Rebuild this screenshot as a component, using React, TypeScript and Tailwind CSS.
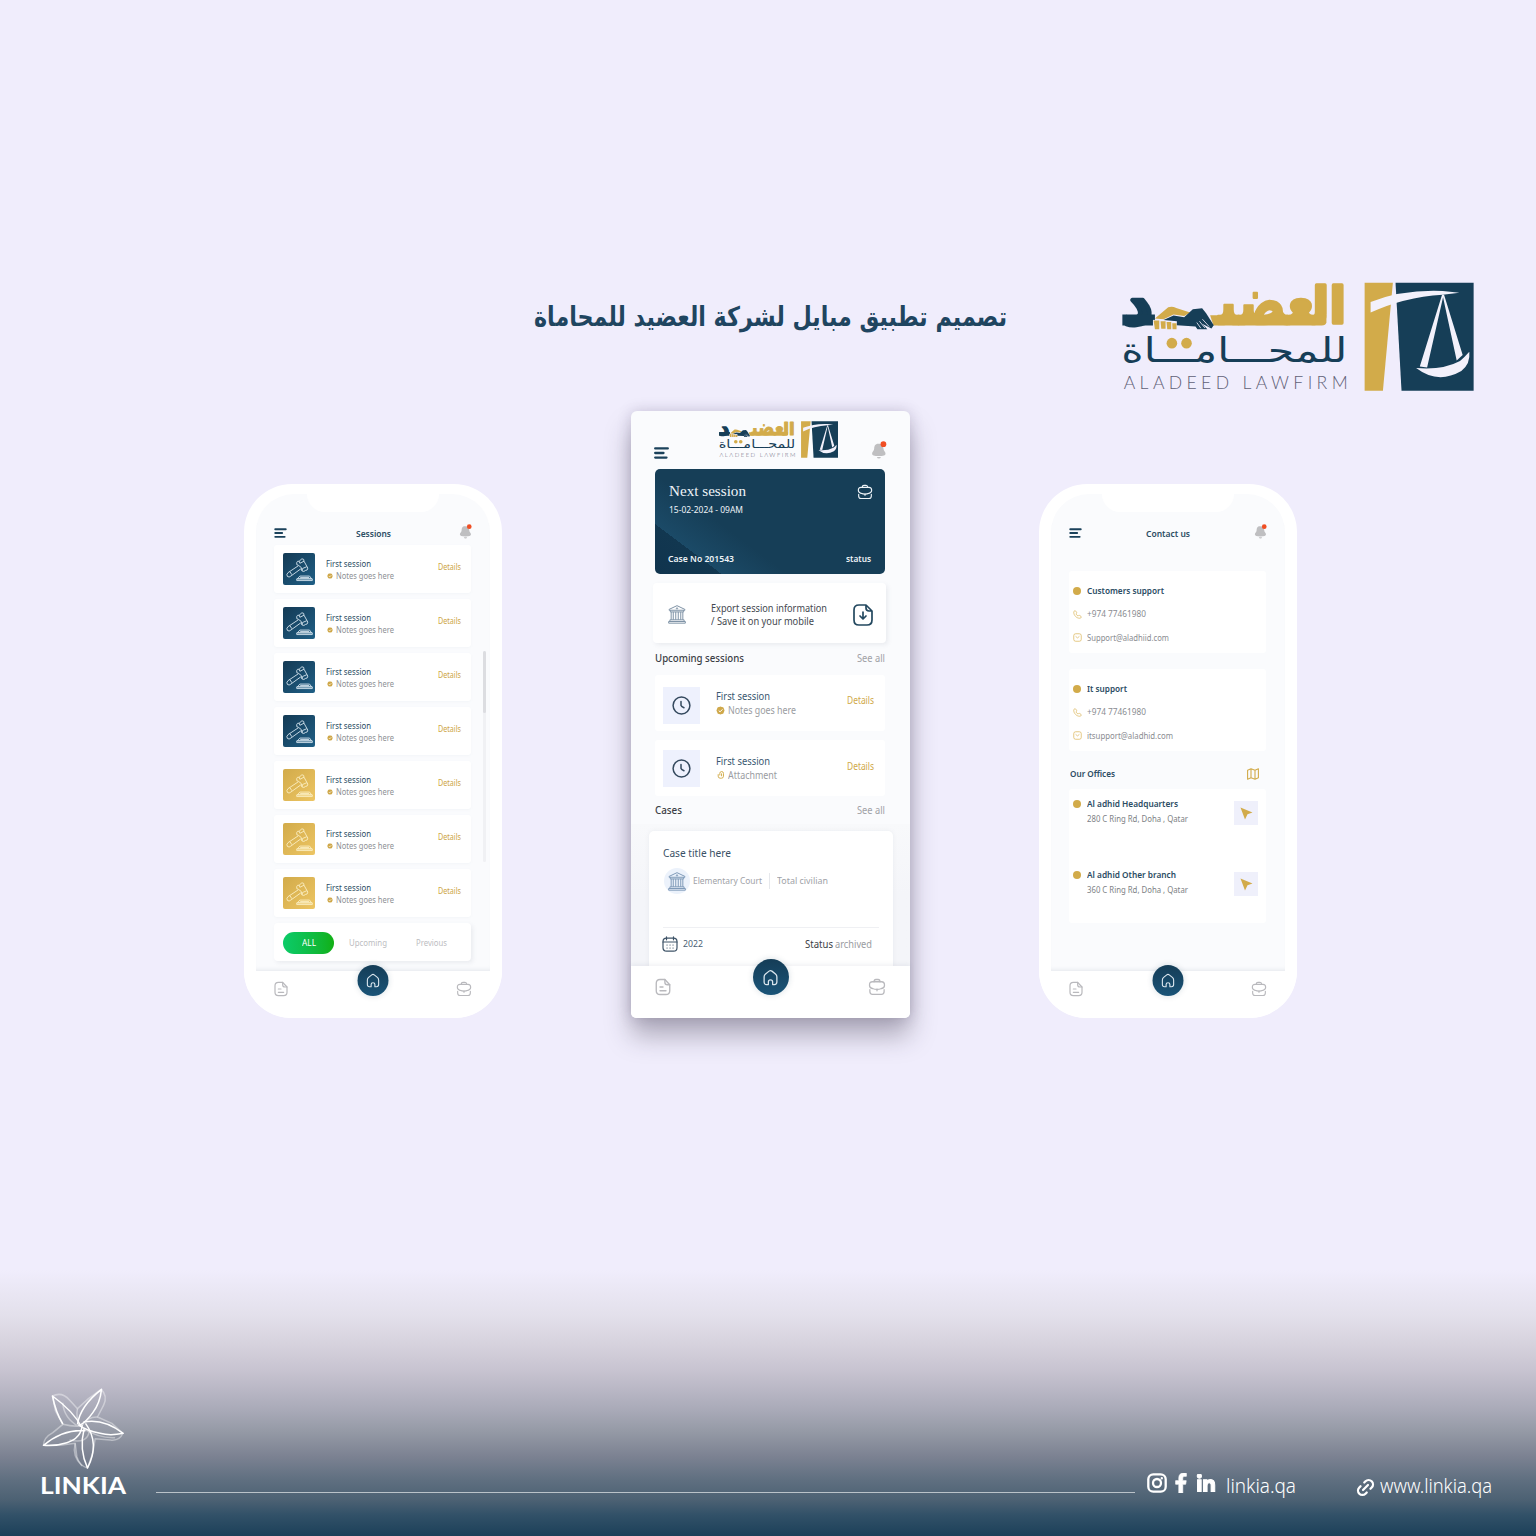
import React, { useLayoutEffect, useRef } from "react";
import { FaFacebookF, FaLinkedinIn } from "react-icons/fa";
import { Link2 } from "lucide-react";

/* One line of text condensed or stretched to a given width. */
function Fit({ w, className = "", children }: { w: number; className?: string; children: React.ReactNode }) {
  const ref = useRef<HTMLSpanElement>(null);
  useLayoutEffect(() => {
    const el = ref.current;
    if (!el) return;
    el.style.transform = "none";
    const natural = el.getBoundingClientRect().width;
    if (natural) el.style.transform = `scaleX(${w / natural})`;
  }, [w]);
  return (
    <span className={`flex shrink-0 items-start ${className}`} style={{ width: w }}>
      <span ref={ref} className="block shrink-0 origin-left whitespace-nowrap">
        {children}
      </span>
    </span>
  );
}

function Logo({ className }: { className: string }) {
  return (
    <svg className={`overflow-visible ${className}`} viewBox="36 36 1057 328">
      <g fontFamily="DejaVu Sans, sans-serif" direction="rtl" strokeLinejoin="round">
        <text x="709" y="160" fontSize="150" fontWeight="700" fill="#d2ab4a" stroke="#d2ab4a" strokeWidth="10" textLength="106" lengthAdjust="spacingAndGlyphs">{"ال\u200d"}</text>
        <text x="615" y="163" fontSize="196" fontWeight="700" fill="#d2ab4a" stroke="#d2ab4a" strokeWidth="7" textLength="290" lengthAdjust="spacingAndGlyphs">{"\u200dعضى\u200d"}</text>
        <text x="128" y="161" fontSize="176" fontWeight="700" fill="#163e57" stroke="#163e57" strokeWidth="13" textLength="90" lengthAdjust="spacingAndGlyphs">د</text>
        <text x="713" y="277" fontSize="102" fill="#163e57" textLength="680" lengthAdjust="spacingAndGlyphs">للمحـــامـــاة</text>
      </g>
      <path d="M300 136H650V158Q648 167 636 167H310Z" fill="#d2ab4a" />
      <path d="M36 134H134V167H36Z" fill="#163e57" />
      <circle cx="185" cy="220" r="16" fill="#d2ab4a" />
      <circle cx="229" cy="220" r="16" fill="#d2ab4a" />
      <path d="M134 146 L174 112 Q186 108 198 114 L240 128 L222 138 L190 134 L160 148Z" fill="#d2ab4a" />
      <path d="M128 150h74v30h-74z" fill="#f0edfc" />
      <path d="M130 152h17v26h-13zM151 154h15v23h-13zM169 156h14v22h-12zM186 160h13v18h-12z" fill="#d2ab4a" />
      <path d="M160 150 L190 137 L222 142 L248 118 L276 115 L288 130 L311 166 L304 176 L276 162 L292 178 H262 L256 170 L200 166 L200 154Z" fill="#163e57" />
      <path d="M277 148l20 22M268 154l16 20M260 158l12 17" stroke="#efecfa" strokeWidth="2.5" />
      <text x="40" y="359" fontFamily="Lato, sans-serif" fontWeight="300" fontSize="53" fill="#5f6076" textLength="674" lengthAdjust="spacing">ALADEED LAWFIRM</text>
      <path d="M765 38H850L820 363H765Z" fill="#d2ab4a" />
      <path d="M858 38H1093V363H876Z" fill="#163e57" />
      <path d="M783 96Q880 58 1000 63L1050 68L1000 74Q880 82 783 128Z" fill="#f3f1fb" />
      <path d="M998 74L931 290L953 293L1001 82L1042 272L1060 256L1004 74Z" fill="#f3f1fb" />
      <path d="M920 295Q1000 302 1052 274Q1066 262 1080 246Q1084 282 1056 304Q985 345 920 295Z" fill="#f3f1fb" />
    </svg>
  );
}

function Menu({ className }: { className: string }) {
  return (
    <svg className={className} viewBox="0 0 15 12" stroke="#1b425b" strokeWidth="2.300" strokeLinecap="round">
      <path d="M1.200 1.400H13.800M1.200 6H9.500M1.200 10.600H12.500" />
    </svg>
  );
}

function Bell({ className }: { className: string }) {
  return (
    <svg className={className} viewBox="0 0 16 17">
      <path d="M7 2.500C3.600 2.500 3 5 3 7.200 3 9.500 1 10 1 12c0 1.500 2 2.200 6.400 2.200s6.300-.8 6.300-2.200c0-2-2-2.500-2-4.800C11.700 5 10.400 2.500 7 2.500Z" fill="#bfbfc1" />
      <path d="M5.500 15h3.800q-.4 1.600-1.900 1.600T5.500 15Z" fill="#bfbfc1" />
      <circle cx="11.700" cy="3" r="2.700" fill="#f04e23" />
    </svg>
  );
}

function Briefcase({ className }: { className: string }) {
  return (
    <svg className={className} viewBox="0 0 24 24" fill="none" stroke="currentColor" strokeWidth="1.700" strokeLinecap="round" strokeLinejoin="round">
      <path d="M8 5C8 2.500 9 2 10.500 2h3C15 2 16 2.500 16 5" />
      <path d="M6 5h12c3 0 4 1.500 4 4.500 0 2.500-1.500 4-4 4.500-2 .8-4 1.200-6 1.200S8 14.800 6 14C3.500 13.500 2 12 2 9.500 2 6.500 3 5 6 5Z" />
      <path d="M12 15v2M2.500 15.500v2.500c0 2.500 1 3.800 3.500 3.800h12c2.500 0 3.500-1.300 3.500-3.800v-2.500" />
    </svg>
  );
}

function Doc({ className }: { className: string }) {
  return (
    <svg className={className} viewBox="0 0 24 24" fill="none" stroke="currentColor" strokeWidth="1.800" strokeLinecap="round" strokeLinejoin="round">
      <path d="M21 9v8c0 3.500-1.500 5-5 5H8c-3.500 0-5-1.500-5-5V7c0-3.500 1.500-5 5-5h6.500Z" />
      <path d="M14.500 2v3.500C14.500 8 16 9 18 9h3M8 12h4M8 17h8" />
    </svg>
  );
}

function Home({ className }: { className: string }) {
  return (
    <svg className={className} viewBox="0 0 24 24" fill="none" stroke="#dbe6ee" strokeWidth="1.800" strokeLinejoin="round">
      <path d="M9 22H6.500C4 22 3 20.500 3 18.500V11c0-2 .6-2.800 2-4l5-4c1.300-1 2.700-1 4 0l5 4c1.400 1.200 2 2 2 4v7.500c0 2-1 3.500-3.500 3.500H15v-3.500c0-4-6-4-6 0Z" />
    </svg>
  );
}

function Court({ className }: { className: string }) {
  return (
    <svg className={className} viewBox="0 0 24 24" fill="none" stroke="currentColor" strokeWidth="1.200" strokeLinejoin="round">
      <path d="M2.500 7.500V6.500L12 2l9.500 4.500v1ZM4 7.500V9.500H20V7.500M5 9.500V19M7.500 9.500V19M10.500 9.500V19M13.500 9.500V19M16.500 9.500V19M19 9.500V19M3.500 19H20.500V21H3.500ZM2 21H22V23H2Z" />
      <circle cx="12" cy="5.300" r=".8" />
    </svg>
  );
}

function Clock() {
  return (
    <svg className="size-[19px]" viewBox="0 0 19 19" fill="none" stroke="#34495e" strokeWidth="1.500" strokeLinecap="round">
      <circle cx="9.500" cy="9.500" r="8.400" />
      <path d="M9 5.500V9.300Q9.200 10.500 12 11.700" />
    </svg>
  );
}

function Check({ className }: { className: string }) {
  return (
    <svg className={className} viewBox="0 0 10 10">
      <path d="M5 .5L6.400 1.200 8 1.300 8.700 2.900 9.500 5 8.700 7 8 8.600 6.400 8.800 5 9.500 3.500 8.800 2 8.600 1.300 7 .5 5 1.300 2.900 2 1.300 3.500 1.200Z" fill="#cfa84a" />
      <path d="M3 5L4.500 6.500L7.200 3.700" fill="none" stroke="#fff" strokeWidth="1.100" />
    </svg>
  );
}

function Gavel({ gold }: { gold: boolean }) {
  return (
    <div className={`flex size-8 items-center justify-center rounded-[2px] bg-gradient-to-br ${gold ? "from-[#d2ab4a] to-[#edc563]" : "from-[#143a54] to-[#1f5f86]"}`}>
      <svg className={`size-[27px] ${gold ? "text-[#fbeec3]" : "text-[#d6e4ee]"}`} viewBox="0 0 78 78" fill="none" stroke="currentColor" strokeWidth="2.600" strokeLinejoin="round">
        <path d="M31 19Q32 14 38 15L46 8Q53 8 52 15L63 35Q63 42 56 42Q52 47 46 43L44 33L36 27Q29 27 31 19Z" />
        <path d="M38 15L40 21L52 15M46 43L48 36L60 31M36 28L6 48Q0 53 4 59Q9 63 14 58L43 37M11 45L17 54" />
        <path d="M33 66L40 58H68L74 66ZM31 66H76V71H31ZM41 62H67" />
      </svg>
    </div>
  );
}

function NavBar({ big = false }: { big?: boolean }) {
  return (
    <div className={`relative flex shrink-0 justify-between bg-white text-[#b9b9bd] ${big ? "h-[52px] rounded-b-[5px] pl-[23px] pr-[24px] pt-[12px] shadow-[0_-2px_4px_rgba(120,130,150,0.10)]" : "h-[47px] w-[258px] rounded-b-[48px] pl-[29px] pr-[30px] pt-[10px]"}`}>
      <Doc className={big ? "size-[18px]" : "size-[16px]"} />
      <div className={`absolute left-1/2 flex -translate-x-1/2 items-center justify-center rounded-full bg-gradient-to-b from-[#153d57] to-[#1a5478] shadow-[0_0_6px_rgba(20,60,90,0.16)] ${big ? "-top-[7px] size-9" : "-top-[6px] size-[31px]"}`}>
        <Home className={big ? "size-[17px]" : "size-[15px]"} />
      </div>
      <Briefcase className={big ? "size-[18px]" : "size-[16px]"} />
    </div>
  );
}

function Phone({ title, titleW, children }: { title: string; titleW: number; children: React.ReactNode }) {
  return (
    <div className="flex h-[534px] w-[258px] shrink-0 flex-col rounded-[48px] bg-white">
      <div className="mx-[12px] mt-[10px] flex h-[477px] flex-col rounded-t-[38px] bg-[#fafbfd] shadow-[inset_0_-4px_4px_-3px_rgba(120,130,150,0.16)]">
        <div className="mx-auto h-[18px] w-[132px] rounded-b-[18px] bg-white" />
        <div className="flex h-[33px] items-center justify-between pl-[18px] pr-[17px] pt-[10px]">
          <Menu className="mb-[2px] h-[10px] w-[13px]" />
          <Fit w={titleW} className="text-[9px] font-semibold leading-[13px] text-[#2b4c63]">{title}</Fit>
          <Bell className="mb-[5px] h-[15px] w-[14px]" />
        </div>
        {children}
      </div>
      <NavBar />
    </div>
  );
}

function Sessions() {
  return (
    <Phone title="Sessions" titleW={35}>
      <div className="flex">
        <div className="flex w-[215px] flex-col gap-[6px] pl-[18px]">
          {[false, false, false, false, true, true, true].map((gold, i) => (
            <div key={i} className="flex h-[48px] items-start rounded-[3px] bg-white pl-[9px] pt-[8px] shadow-[0_1px_3px_rgba(120,130,150,0.05)]">
              <Gavel gold={gold} />
              <div className="ml-[11px] flex w-[112px] flex-col pt-[5px]">
                <Fit w={45} className="text-[8.500px] leading-[12px] text-[#2b4c63]">First session</Fit>
                <div className="flex items-center gap-[3px]">
                  <Check className="ml-px size-[6px]" />
                  <Fit w={58} className="text-[8.500px] leading-[12px] text-[#8d8f94]">Notes goes here</Fit>
                </div>
              </div>
              <Fit w={23} className="mt-[8px] text-[8px] leading-[12px] text-[#cda544]">Details</Fit>
            </div>
          ))}
        </div>
        <div className="ml-[12px] mt-[106px] h-[211px] w-[3px] rounded-full bg-[#f0f1f4]">
          <div className="h-[62px] rounded-full bg-[#dcdde1]" />
        </div>
      </div>
      <div className="ml-[18px] mt-[6px] flex h-[38px] w-[197px] items-center rounded-[4px] bg-white pl-[9px] pt-[2px] shadow-[2px_2px_4px_rgba(120,130,150,0.12)]">
        <div className="flex h-[22px] w-[51px] items-center justify-center rounded-full bg-gradient-to-r from-[#0ccb68] to-[#12b012]">
          <Fit w={14} className="text-[8px] leading-[12px] text-white">ALL</Fit>
        </div>
        <Fit w={38} className="ml-[15px] text-[8px] leading-[12px] text-[#bcbdc1]">Upcoming</Fit>
        <Fit w={31} className="ml-[29px] text-[8px] leading-[12px] text-[#bcbdc1]">Previous</Fit>
      </div>
    </Phone>
  );
}

function Support({ name, nameW, mail, mailW }: { name: string; nameW: number; mail: string; mailW: number }) {
  return (
    <div className="ml-[18px] flex h-[82px] w-[197px] flex-col rounded-[3px] bg-white pl-[4px] pt-[8px]">
      <div className="flex h-[23.500px] items-center gap-[6px]">
        <div className="size-[8px] rounded-full bg-[#d2ab4a]" />
        <Fit w={nameW} className="text-[9px] font-semibold leading-[12px] text-[#2b4c63]">{name}</Fit>
      </div>
      <div className="flex h-[23.500px] items-center gap-[5px]">
        <svg className="size-[9px]" viewBox="0 0 24 24" fill="none" stroke="#dcb75c" strokeWidth="2">
          <path d="M22 18.500c0 2-2 3.500-4 3.500C9 22 2 14 2 6c0-2 1.500-4 3.500-4 1 0 1.500.5 2.300 1.700l2 3c1 2-2 3-1.500 4.300 1 2 3 4 4.700 4.700 1.500.4 2-2.500 4-1.500l3.500 2.300c1 .7 1.500 1 1.500 2Z" />
        </svg>
        <Fit w={59} className="text-[8px] leading-[12px] text-[#8a8c91]">+974 77461980</Fit>
      </div>
      <div className="flex h-[23.500px] items-center gap-[5px]">
        <svg className="size-[9px]" viewBox="0 0 24 24" fill="none" stroke="#dcb75c" strokeWidth="2">
          <rect x="2" y="2" width="20" height="20" rx="5" />
          <path d="M7 9l5 4 5-4" />
        </svg>
        <Fit w={mailW} className="text-[8.500px] leading-[12px] text-[#8a8c91]">{mail}</Fit>
      </div>
    </div>
  );
}

function Office({ name, nameW, addr }: { name: string; nameW: number; addr: string }) {
  return (
    <div className="flex h-[71px] items-start pl-[4px]">
      <div className="mt-[11px] size-[8px] rounded-full bg-[#d2ab4a]" />
      <div className="ml-[6px] flex w-[147px] flex-col gap-[3px] pt-[9px]">
        <Fit w={nameW} className="text-[9px] font-semibold leading-[12px] text-[#2b4c63]">{name}</Fit>
        <Fit w={101} className="text-[8.500px] leading-[12px] text-[#7d7f85]">{addr}</Fit>
      </div>
      <div className="mt-[12px] flex size-[24px] items-center justify-center bg-[#eff0fb]">
        <svg className="size-[13px]" viewBox="0 0 13 13" fill="#d2ab4a">
          <path d="M.5 .5L12.500 5.500L7.500 7.300L5 12.500Z" />
        </svg>
      </div>
    </div>
  );
}

function Contact() {
  return (
    <Phone title="Contact us" titleW={44}>
      <div className="h-[26px]" />
      <Support name="Customers support" nameW={77} mail="Support@aladhiid.com" mailW={82} />
      <div className="h-[16px]" />
      <Support name="It support" nameW={40} mail="itsupport@aladhid.com" mailW={86} />
      <div className="ml-[19px] flex h-[38px] w-[189px] items-center justify-between pt-[7px]">
        <Fit w={45} className="text-[8.500px] font-semibold leading-[12px] text-[#2b4c63]">Our Offices</Fit>
        <svg className="h-[12px] w-[12px]" viewBox="0 0 12 12" fill="none" stroke="#d2ab4a" strokeWidth="1.100" strokeLinejoin="round">
          <path d="M.6 2.200L4 .7L8 2.200L11.400 .7V9.800L8 11.300L4 9.800L.6 11.300ZM4 .7V9.800M8 2.200V11.300" />
        </svg>
      </div>
      <div className="ml-[18px] h-[134px] w-[197px] rounded-[3px] bg-white">
        <Office name="Al adhid Headquarters" nameW={91} addr="280 C Ring Rd, Doha , Qatar" />
        <Office name="Al adhid Other branch" nameW={89} addr="360 C Ring Rd, Doha , Qatar" />
      </div>
    </Phone>
  );
}

function SectionHead({ title, w, className }: { title: string; w: number; className: string }) {
  return (
    <div className={`flex items-center justify-between pl-[24px] pr-[25px] ${className}`}>
      <Fit w={w} className="text-[10.500px] font-medium leading-[14px] text-[#3b3e45]">{title}</Fit>
      <Fit w={28} className="text-[10px] leading-[14px] text-[#a0a1a6]">See all</Fit>
    </div>
  );
}

function Upcoming({ note, noteW, clip = false }: { note: string; noteW: number; clip?: boolean }) {
  return (
    <div className="ml-[24px] flex h-[56px] w-[230px] items-start rounded-[3px] bg-white pl-[8px]">
      <div className={`flex size-[37px] items-center justify-center bg-[#eef1fd] ${clip ? "mt-[10px]" : "mt-[12px]"}`}>
        <Clock />
      </div>
      <div className="ml-[16px] flex w-[131px] flex-col pt-[14px]">
        <Fit w={54} className="text-[10px] leading-[14px] text-[#3a5870]">First session</Fit>
        <div className="flex items-center gap-[3px]">
          {clip ? (
            <svg className="ml-px size-[8px]" viewBox="0 0 9 10" fill="none" stroke="#d2ab4a" strokeWidth="1.200">
              <path d="M3 5.500V3a2.300 2.300 0 0 1 4.600 0v3.500a2.500 2.500 0 0 1-2.500 2.500H3.500A2.500 2.500 0 0 1 1 6.500V4M5.200 3v3.500" />
            </svg>
          ) : (
            <Check className="size-[9px]" />
          )}
          <Fit w={noteW} className="text-[10px] leading-[14px] text-[#9a9ca1]">{note}</Fit>
        </div>
      </div>
      <Fit w={27} className={`text-[10px] leading-[14px] text-[#d0a949] ${clip ? "mt-[19px]" : "mt-[18px]"}`}>Details</Fit>
    </div>
  );
}

function Main() {
  return (
    <div className="flex h-[607px] w-[279px] shrink-0 flex-col rounded-[6px] bg-[#fafbfd] shadow-[0_18px_26px_rgba(50,45,65,0.34),0_0_14px_rgba(80,70,110,0.22)]">
      <div className="flex h-[58px] items-start justify-between pl-[23px] pr-[22px]">
        <Menu className="mt-[36px] h-[12px] w-[15px]" />
        <Logo className="ml-[16px] mt-[10px] h-[37px] w-[119px]" />
        <Bell className="mt-[30px] h-[18px] w-[17px]" />
      </div>
      <div className="ml-[24px] flex h-[105px] w-[230px] flex-col rounded-[5px] bg-[linear-gradient(37deg,#10344e_0%,#123750_18%,#1b4a67_18%,#163e57_36%)] text-[#eef3f7]">
        <div className="flex justify-between pl-[14px] pr-[12px] pt-[13px]">
          <Fit w={77} className="font-['Liberation_Serif',serif] text-[15px] leading-[18px]">Next session</Fit>
          <Briefcase className="mt-[2px] size-[16px]" />
        </div>
        <Fit w={74} className="ml-[14px] mt-[3px] text-[9px] leading-[14px]">15-02-2024 - 09AM</Fit>
        <div className="mb-[8px] mt-auto flex justify-between pl-[13px] pr-[14px]">
          <Fit w={66} className="text-[9px] font-semibold leading-[14px]">Case No 201543</Fit>
          <Fit w={25} className="text-[9px] font-semibold leading-[14px]">status</Fit>
        </div>
      </div>
      <div className="ml-[22px] mt-[9px] flex h-[60px] w-[233px] items-center rounded-[4px] bg-white pl-[14px] shadow-[2px_2px_4px_rgba(120,130,150,0.12)]">
        <Court className="mt-px size-[20px] text-[#7f93a6]" />
        <div className="ml-[24px] w-[142px] pt-[4px]">
          <Fit w={116} className="text-[10px] leading-[13px] text-[#454950]">Export session information</Fit>
          <Fit w={103} className="text-[10px] leading-[13px] text-[#454950]">/ Save it on your mobile</Fit>
        </div>
        <svg className="mt-[3px] h-[22px] w-[20px]" viewBox="0 0 20 22" fill="none" stroke="#23485f" strokeWidth="1.700" strokeLinecap="round" strokeLinejoin="round">
          <path d="M19 7v9q0 5-5 5H6q-5 0-5-5V6q0-5 5-5h7ZM13 1v3q0 3 3 3h3M10 8v6.500M7 12l3 3 3-3" />
        </svg>
      </div>
      <SectionHead title="Upcoming sessions" w={89} className="h-[30px]" />
      <div className="flex flex-col gap-[9px] pt-[2px]">
        <Upcoming note="Notes goes here" noteW={68} />
        <Upcoming note="Attachment" noteW={49} clip />
      </div>
      <SectionHead title="Cases" w={27} className="h-[28px]" />
      <div className="h-[142px] overflow-hidden bg-gradient-to-b from-[#f8f9fb] via-[#f4f5f9] to-[#f4f5f9] pl-[18px] pt-[7px]">
        <div className="flex h-[150px] w-[244px] flex-col rounded-[5px] bg-white pl-[14px] pt-[15px] shadow-[0_0_4px_rgba(120,130,150,0.10)]">
          <Fit w={68} className="text-[10.500px] leading-[14px] text-[#3a5065]">Case title here</Fit>
          <div className="mt-[8px] flex items-center">
            <div className="ml-px flex size-[26px] items-center justify-center rounded-full bg-[#ecf2fb]">
              <Court className="size-[20px] text-[#7f9ab8]" />
            </div>
            <Fit w={69} className="ml-[3px] text-[9px] leading-[14px] text-[#a0a2a7]">Elementary Court</Fit>
            <div className="mx-[7px] h-[16px] w-px bg-[#e6e8ec]" />
            <Fit w={51} className="text-[9px] leading-[14px] text-[#a0a2a7]">Total civilian</Fit>
          </div>
          <div className="mt-[33px] h-px w-[216px] bg-[#eff0f3]" />
          <div className="mt-[8px] flex items-center">
            <svg className="-ml-px size-[16px]" viewBox="0 0 16 16" fill="none" stroke="#3f5468" strokeWidth="1.200" strokeLinecap="round">
              <rect x="1" y="2.200" width="14" height="13" rx="3.500" />
              <path d="M1 6h14M4.500.8v3M11.500.8v3" />
              <path d="M5 9h.1M8 9h.1M11 9h.1M5 12h.1M8 12h.1M11 12h.1" />
            </svg>
            <Fit w={20} className="ml-[5px] text-[9px] leading-[14px] text-[#4c5f74]">2022</Fit>
            <Fit w={28} className="ml-[102px] text-[10px] leading-[14px] text-[#3b3e45]">Status</Fit>
            <Fit w={37} className="ml-[2px] text-[10px] leading-[14px] text-[#9a9ca1]">archived</Fit>
          </div>
        </div>
      </div>
      <NavBar big />
    </div>
  );
}

function Star() {
  return (
    <svg className="h-[85px] w-[87px]" viewBox="120 50 260 255" fill="none" strokeLinejoin="round">
      <g stroke="#fff" strokeOpacity=".4" strokeWidth="4.500">
        <path d="M157 80Q185 66 208 92L232 118L265 88L303 60Q324 80 310 108L292 143L335 162L368 192Q358 216 330 212L285 208L278 250L262 296Q238 290 230 262L225 222L180 228L130 228Q130 205 158 190L188 165L166 125Z" />
        <path d="M188 100Q190 145 236 172M232 118Q226 145 240 168M292 143Q262 142 246 168M345 205Q300 208 248 178M225 222Q215 260 246 290M188 165Q215 172 243 170" />
        <path d="M208 212Q262 225 268 184" />
      </g>
      <g stroke="#fff" strokeWidth="4.500">
        <path d="M243 172Q222 128 157 80Q166 128 188 164" />
        <path d="M232 165Q240 110 304 60Q300 100 278 130Q258 158 238 168" />
        <path d="M250 158Q310 146 369 192Q330 200 300 192Q258 184 234 166" />
        <path d="M256 162Q300 222 262 296Q236 240 252 178" />
        <path d="M256 184Q190 178 130 228Q165 231 200 220Q244 206 246 166" />
      </g>
    </svg>
  );
}

export default function App() {
  return (
    <div className="flex h-[1536px] w-[1536px] flex-col overflow-hidden bg-[#f0edfc] font-['Noto_Sans',sans-serif]">
      <header className="flex h-[411px] shrink-0 items-start">
        <Fit w={473} className="ml-[534px] mt-[298px] font-['DejaVu_Sans',sans-serif] text-[27px] font-bold leading-[38px] text-[#1f4560]">
          <bdi dir="rtl">تصميم تطبيق مبايل لشركة العضيد للمحاماة</bdi>
        </Fit>
        <Logo className="ml-[115px] mt-[282px] h-[109px] w-[352px]" />
      </header>
      <main className="flex shrink-0 items-end gap-[129px] pl-[244px]">
        <Sessions />
        <Main />
        <Contact />
      </main>
      <footer className="mt-auto flex h-[266px] shrink-0 items-end bg-[linear-gradient(to_bottom,#f0edfc_0%,#e3e0eb_17%,#d6d2dd_28%,#c7c3d0_38%,#b9b7c5_45%,#a8a9b7_53%,#9499a5_61%,#7c8292_70%,#5f6f80_79%,#4c6173_86.5%,#325168_92%,#1c4059_100%)] pb-[37px] text-white">
        <div className="ml-[40px] flex w-[116px] flex-col">
          <Star />
          <Fit w={86} className="mb-px mt-px font-['Lato',sans-serif] text-[23.500px] font-bold leading-[26px]">LINKIA</Fit>
        </div>
        <div className="mb-[6px] h-px w-[979px] bg-white/60" />
        <svg className="mb-[6px] ml-[12px] size-[20px]" viewBox="0 0 20 20" fill="none" stroke="#fff" strokeWidth="2.300">
          <rect x="1.300" y="1.300" width="17.400" height="17.400" rx="5" />
          <circle cx="10" cy="10" r="4" />
          <circle cx="14.800" cy="5.200" r=".6" strokeWidth="1.200" />
        </svg>
        <FaFacebookF className="mb-[6px] ml-[4px] size-[20px]" stroke="#fff" strokeWidth={18} />
        <FaLinkedinIn className="mb-[5px] ml-[5px] size-[20px]" stroke="#fff" strokeWidth={26} />
        <Fit w={70} className="mb-[-1px] ml-[10px] text-[20px] font-light leading-[28px]">linkia.qa</Fit>
        <Link2 className="mb-px ml-[59px] size-[21px] -rotate-45" strokeWidth={2.6} />
        <Fit w={112} className="mb-[-1px] ml-[4px] text-[20px] font-light leading-[28px]">www.linkia.qa</Fit>
      </footer>
    </div>
  );
}
